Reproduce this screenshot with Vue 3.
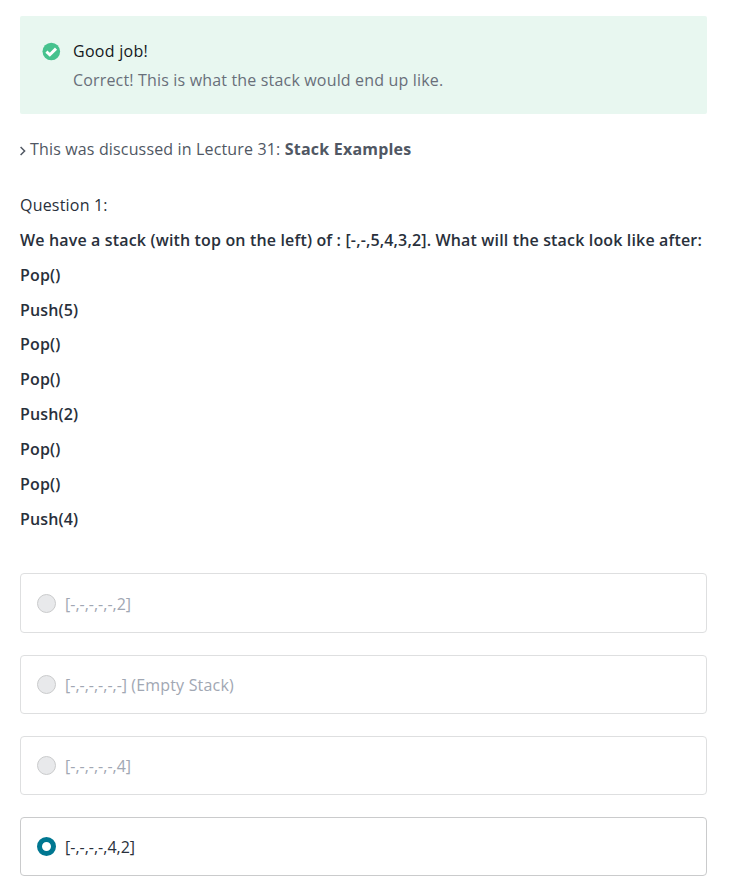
<script setup>
const steps = ['Pop()', 'Push(5)', 'Pop()', 'Pop()', 'Push(2)', 'Pop()', 'Pop()', 'Push(4)']
const answers = [
  { text: '[-,-,-,-,-,2]', selected: false },
  { text: '[-,-,-,-,-,-]', note: '(Empty Stack)', selected: false },
  { text: '[-,-,-,-,-,4]', selected: false },
  { text: '[-,-,-,-,4,2]', selected: true }
]
</script>

<template>
  <main class="quiz">
    <section class="alert">
      <svg class="check" viewBox="0 0 18 18">
        <circle cx="9.3" cy="8.5" r="8.8" fill="#46c28e" />
        <path d="M4.4 8.6 7.8 11.8 14 5.6" fill="none" stroke="#fff" stroke-width="2.9" />
      </svg>
      <div>
        <div class="title">Good job!</div>
        <div class="message">Correct! This is what the stack would end up like.</div>
      </div>
    </section>
    <p class="related">
      <svg class="chevron" viewBox="0 0 6 10"><path d="M.6 1 4.6 5 .6 9" fill="none" stroke="#505763" stroke-width="1.5" /></svg>
      <span class="lecture">This was discussed in Lecture 31: <b>Stack Examples</b></span>
    </p>
    <div class="number">Question 1:</div>
    <div class="prompt">
      <p>We have a stack (with top on the left) of : [-,-,5,4,3,2]. What will the stack look like after:</p>
      <p v-for="(step, i) in steps" :key="i">{{ step }}</p>
    </div>
    <ul class="answers">
      <li v-for="a in answers" :key="a.text" :class="{ selected: a.selected }">
        <span class="radio"></span>
        <span>{{ a.text }}<template v-if="a.note">{{ ' ' }}<span class="note">{{ a.note }}</span></template></span>
      </li>
    </ul>
  </main>
</template>

<style>
body { margin: 0; background: #fff; }
</style>
<style scoped>
.quiz { box-sizing: border-box; width: 746px; height: 887px; overflow: hidden; padding: 16px 39px 0 20px; font: 16px/23px "Open Sans", sans-serif; color: #29303b; }
.alert { box-sizing: border-box; height: 98px; background: #e8f7f0; border-radius: 2px; padding: 24px 22px; display: flex; gap: 13px; }
.check { width: 18px; height: 18px; margin-top: 3px; overflow: visible; }
.title { color: #14171c; margin-bottom: 6px; letter-spacing: .27px; }
.message { color: #686f7a; letter-spacing: .17px; }
.related { display: flex; align-items: center; gap: 4px; margin: 24px 0 33px; color: #505763; }
.lecture { letter-spacing: .155px; }
.lecture b { letter-spacing: .21px; }
.chevron { width: 6px; height: 10px; margin-top: 2px; }
.number { margin-bottom: 11.88px; letter-spacing: .2px; }
.prompt { font-weight: 600; white-space: nowrap; letter-spacing: .155px; }
.prompt p { margin: 0 0 11.86px; }
.answers { list-style: none; margin: 42.4px 0 0; padding: 0; display: grid; gap: 22px; }
.answers li { box-sizing: border-box; height: 59px; border: 1px solid #dedfe0; border-radius: 4px; padding: 2px 16px 0; display: flex; align-items: center; gap: 9px; color: #a1a7b3; }
.answers li:first-child { height: 60px; padding-top: 3px; }
.note { letter-spacing: .19px; }
.radio { box-sizing: border-box; width: 19px; height: 19px; margin-top: -2px; border: 1px solid #cacbcc; border-radius: 50%; background: #e8e9eb; }
.answers .selected { color: #29303b; border-color: #cacbcc; }
.selected .radio { border: 5px solid #007791; background: #fff; }
</style>
